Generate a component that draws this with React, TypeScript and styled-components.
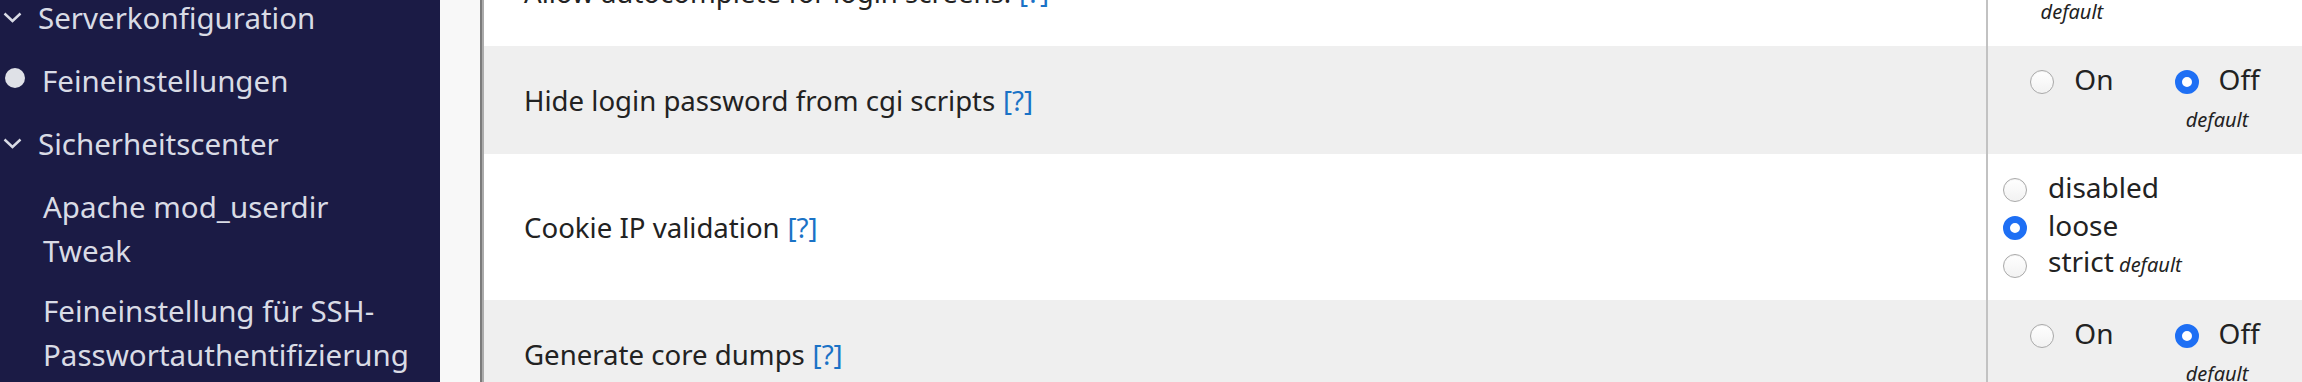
import styled, { createGlobalStyle } from "styled-components";

const GlobalStyle = createGlobalStyle`
  body {
    margin: 0;
    font-family: "Noto Sans", "Open Sans", sans-serif;
    overflow: hidden;
  }
`;

const Page = styled.div`
  display: flex;
  height: 382px;
  overflow: hidden;
`;

const Sidebar = styled.nav`
  width: 440px;
  flex: none;
  background: #1b1b45;
  color: #d9dbe5;
  font-size: 29.5px;
  line-height: 44px;
`;

const NavList = styled.div`
  margin-top: -14px;
  padding-right: 20px;
`;

const NavHeader = styled.div<{ $indent: number }>`
  display: grid;
  grid-template-columns: ${(p) => p.$indent}px 1fr;
  align-items: center;
  padding: 9.5px 0;
`;

const SubList = styled.div`
  padding-top: 1.5px;
`;

const SubItem = styled.div`
  padding: 8px 0 8px 43px;
`;

const Chevron = styled.svg`
  margin-left: 3px;
  display: block;
`;

const Bullet = styled.span`
  display: block;
  width: 20px;
  height: 20px;
  margin: -6px 0 0 5px;
  border-radius: 50%;
  background: #dfe1e7;
`;

const Gutter = styled.div`
  width: 40px;
  flex: none;
  background: #f8f8f8;
`;

const Main = styled.main`
  flex: 1;
  border-left: 2px solid #7b7b7b;
`;

const Table = styled.div`
  margin-top: -62px;
  border-left: 2px solid #ababab;
`;

const Row = styled.div<{ $shade: boolean; $height: number }>`
  display: grid;
  grid-template-columns: 1fr 314px;
  height: ${(p) => p.$height}px;
  background: ${(p) => (p.$shade ? "#efefef" : "#ffffff")};
  color: #222;
`;

const LabelCell = styled.div`
  display: flex;
  align-items: center;
  padding-left: 40px;
  font-size: 27.6px;
  border-right: 2px solid #c2c2c2;
`;

const Help = styled.a`
  color: #1a72c6;
  text-decoration: none;
  margin-left: 0.28em;
`;

const ValueCell = styled.div<{ $center?: boolean }>`
  padding: 14px 0 0 ${(p) => (p.$center ? 0 : 15)}px;
  display: flex;
  justify-content: ${(p) => (p.$center ? "center" : "flex-start")};
  align-items: flex-start;
  gap: 61px;
`;

const Choice = styled.div`
  display: flex;
  flex-direction: column;
  align-items: center;
`;

const Stack = styled.div`
  display: flex;
  flex-direction: column;
`;

const OptionLine = styled.label<{ $gap: number }>`
  display: flex;
  align-items: center;
  gap: ${(p) => p.$gap}px;
  height: 38px;
  font-size: 28px;
  line-height: 38px;
  white-space: nowrap;
`;

const Radio = styled.span<{ $checked: boolean }>`
  display: block;
  flex: none;
  box-sizing: border-box;
  width: 24px;
  height: 24px;
  margin-top: 6px;
  border-radius: 50%;
  background: ${(p) => (p.$checked ? "#ffffff" : "linear-gradient(#ffffff, #f2f2f2)")};
  border: ${(p) => (p.$checked ? "7.5px solid #1e6ff4" : "1.5px solid #a9a9a9")};
  box-shadow: ${(p) => (p.$checked ? "none" : "inset 0 1px 1px rgba(0,0,0,0.05)")};
`;

const DefaultNote = styled.span<{ $inline?: boolean }>`
  font-style: italic;
  font-size: 20px;
  line-height: ${(p) => (p.$inline ? "38px" : "44px")};
`;

function ChevronDown() {
  return (
    <Chevron width="19" height="11" viewBox="0 0 19 11">
      <path d="M1.5 1.5 L9.5 9 L17.5 1.5" fill="none" stroke="#d9dbe5" strokeWidth="2.4" />
    </Chevron>
  );
}

type Opt = { label: string; checked?: boolean; isDefault?: boolean };

function InlineChoices({ options }: { options: Opt[] }) {
  return (
    <ValueCell $center>
      {options.map((o) => (
        <Choice key={o.label}>
          <OptionLine $gap={20}>
            <Radio $checked={!!o.checked} />
            {o.label}
          </OptionLine>
          {o.isDefault && <DefaultNote>default</DefaultNote>}
        </Choice>
      ))}
    </ValueCell>
  );
}

function StackedChoices({ options }: { options: Opt[] }) {
  return (
    <ValueCell>
      <Stack>
        {options.map((o) => (
          <OptionLine key={o.label} $gap={21}>
            <Radio $checked={!!o.checked} />
            <span>
              {o.label}
              {o.isDefault && <DefaultNote $inline> default</DefaultNote>}
            </span>
          </OptionLine>
        ))}
      </Stack>
    </ValueCell>
  );
}

export default function App() {
  return (
    <>
      <GlobalStyle />
      <Page>
        <Sidebar>
          <NavList>
            <NavHeader $indent={38}>
              <ChevronDown />
              <span>Serverkonfiguration</span>
            </NavHeader>
            <NavHeader $indent={42}>
              <Bullet />
              <span>Feineinstellungen</span>
            </NavHeader>
            <NavHeader $indent={38}>
              <ChevronDown />
              <span>Sicherheitscenter</span>
            </NavHeader>
            <SubList>
              <SubItem>Apache mod_userdir Tweak</SubItem>
              <SubItem>Feineinstellung für SSH-Passwortauthentifizierung</SubItem>
            </SubList>
          </NavList>
        </Sidebar>
        <Gutter />
        <Main>
          <Table>
            <Row $shade={false} $height={108}>
              <LabelCell>
                Allow autocomplete for login screens.<Help href="#">[?]</Help>
              </LabelCell>
              <InlineChoices
                options={[
                  { label: "On", checked: true, isDefault: true },
                  { label: "Off" },
                ]}
              />
            </Row>
            <Row $shade $height={108}>
              <LabelCell>
                Hide login password from cgi scripts<Help href="#">[?]</Help>
              </LabelCell>
              <InlineChoices
                options={[
                  { label: "On" },
                  { label: "Off", checked: true, isDefault: true },
                ]}
              />
            </Row>
            <Row $shade={false} $height={146}>
              <LabelCell>
                Cookie IP validation<Help href="#">[?]</Help>
              </LabelCell>
              <StackedChoices
                options={[
                  { label: "disabled" },
                  { label: "loose", checked: true },
                  { label: "strict", isDefault: true },
                ]}
              />
            </Row>
            <Row $shade $height={108}>
              <LabelCell>
                Generate core dumps<Help href="#">[?]</Help>
              </LabelCell>
              <InlineChoices
                options={[
                  { label: "On" },
                  { label: "Off", checked: true, isDefault: true },
                ]}
              />
            </Row>
          </Table>
        </Main>
      </Page>
    </>
  );
}
